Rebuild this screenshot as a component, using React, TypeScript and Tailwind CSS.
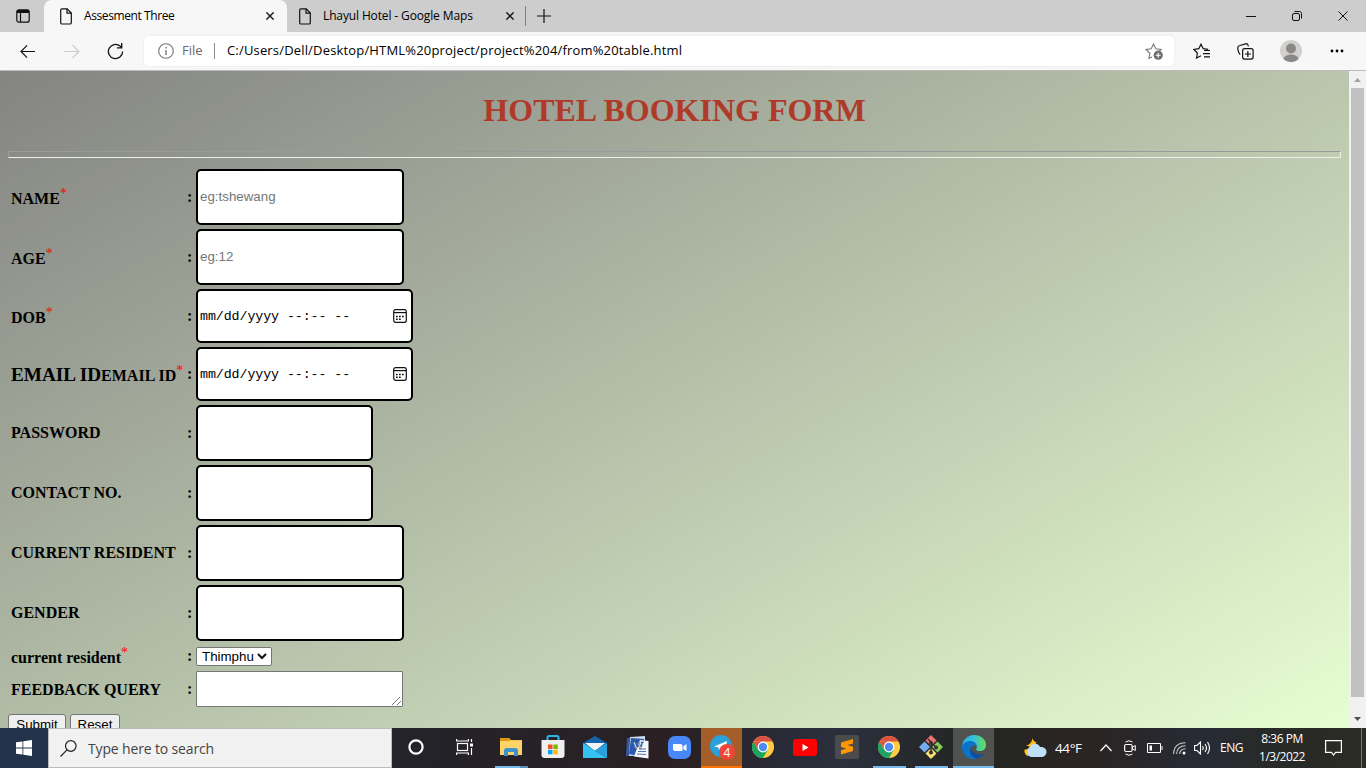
import React from "react";

const ui = "font-['Open_Sans','Noto_Sans',sans-serif]";

function PageIcon() {
  return (
    <svg width="12" height="17" viewBox="0 0 12 17" fill="none" stroke="#111" strokeWidth="1.2" className="shrink-0">
      <path d="M2 .8h5.2L11.3 5v9.7c0 .8-.5 1.3-1.3 1.3H2c-.8 0-1.3-.5-1.3-1.3V2.1C.7 1.3 1.2.8 2 .8Z" />
      <path d="M7 .8V5.2h4.3" />
    </svg>
  );
}

function Cross({ size = 8, w = 1.7 }: { size?: number; w?: number }) {
  return (
    <svg width={size} height={size} viewBox="0 0 10 10" stroke="#111" strokeWidth={w} className="shrink-0">
      <path d="M.5.5l9 9M9.5.5l-9 9" />
    </svg>
  );
}

function TabStrip() {
  return (
    <div className="flex h-8 items-stretch bg-[#cdcdcd]">
      <div className="flex w-[44px] items-center pl-4">
        <svg width="14" height="14" viewBox="0 0 14 14" fill="none" stroke="#111" strokeWidth="1.2">
          <rect x=".8" y=".8" width="12.4" height="12.4" rx="2" />
          <path d="M1 2.5h12" strokeWidth="3" />
          <path d="M4.5 4v9" />
        </svg>
      </div>
      <div className="flex w-[243px] shrink-0 items-center rounded-t-lg bg-[#f7f7f7] pl-[16px] pr-[13px]">
        <PageIcon />
        <span className="ml-3 grow whitespace-nowrap text-[12px] tracking-[-0.4px] text-black">Assesment Three</span>
        <Cross />
      </div>
      <div className="flex w-[238px] shrink-0 items-center pl-3 pr-[11px]">
        <PageIcon />
        <span className="ml-3 grow whitespace-nowrap text-[12px] tracking-[-0.13px] text-black">Lhayul Hotel - Google Maps</span>
        <Cross />
      </div>
      <div className="mt-[6px] h-5 w-px bg-[#808080]" />
      <div className="flex w-9 items-center justify-center">
        <svg width="14" height="14" viewBox="0 0 14 14" stroke="#111" strokeWidth="1.2"><path d="M7 0v14M0 7h14" /></svg>
      </div>
      <div className="ml-auto flex items-center gap-[36px] pr-[18px]">
        <svg width="10" height="10" stroke="#111"><path d="M0 5.5h10" /></svg>
        <svg width="10" height="10" viewBox="0 0 10 10" fill="none" stroke="#111">
          <rect x=".5" y="2.5" width="7" height="7" rx="1.5" />
          <path d="M2.500.5h5c1.3 0 2 .7 2 2v5" />
        </svg>
        <Cross size={10} w={1} />
      </div>
    </div>
  );
}

function Toolbar() {
  return (
    <div className="flex h-[39px] items-center border-b border-[#bcbcbc] bg-[#f7f7f7]">
      <div className="flex w-36 shrink-0 items-center pl-[20px]">
        <svg width="16" height="15" viewBox="0 0 17 15" fill="none" stroke="#111" strokeWidth="1.2"><path d="M16 7.5H1M7.5 1L1 7.5 7.5 14" /></svg>
        <svg width="16" height="15" viewBox="0 0 16 15" fill="none" stroke="#ccc" strokeWidth="1.1" className="ml-[28px]"><path d="M0 7.5h15M8.5 1L15 7.5 8.500 14" /></svg>
        <svg width="17" height="17" viewBox="0 0 17 17" fill="none" stroke="#111" strokeWidth="1.3" className="ml-[27px]">
          <path d="M15.6 8.5a7.1 7.1 0 1 1-2.5-5.4l1.4 1.3" /><path d="M14.7 0v4.8H9.9" />
        </svg>
      </div>
      <div className="flex h-[30px] w-[1030px] shrink-0 items-center rounded bg-white pl-[14px] shadow-[0_0_2px_#ddd]">
        <svg width="16" height="16" viewBox="0 0 16 16" fill="none" stroke="#777" strokeWidth="1.1"><circle cx="8" cy="8" r="7.3" /><path d="M8 7v5M8 4v1.5" strokeWidth="1.4" /></svg>
        <span className="ml-2 w-[24px] text-[13px] text-[#6a6a6a]">File</span>
        <span className="ml-2 h-4 w-px bg-[#8a8a8a]" />
        <span className="ml-3 grow whitespace-nowrap text-[13px] tracking-[0.17px] text-black">C:/Users/Dell/Desktop/HTML%20project/project%204/from%20table.html</span>
        <svg width="18" height="18" viewBox="0 0 18 18" fill="none" stroke="#777" strokeWidth="1.1" className="mr-[11px]">
          <path d="M7 15L4 16.3l.8-5L1 7.5l5.2-.8L8.5 2l2.3 4.7 5.2.8-1.5 1.5" />
          <circle cx="13.2" cy="13.2" r="4.6" fill="#6d6d6d" stroke="none" /><path d="M13.200 10.7v5M10.7 13.2h5" stroke="#fff" />
        </svg>
      </div>
      <div className="flex grow items-center pl-[19px]">
        <svg width="17" height="16" viewBox="0 0 17 16" fill="none" stroke="#111" strokeWidth="1.2">
          <path d="M8 12.7L3.5 15l.9-5L.8 6.400l5-.7L8 1.2l2.2 4.5 5 .6M11 7.5h6M10 10.7h7M11 13.9h6" />
        </svg>
        <svg width="17" height="17" viewBox="0 0 17 17" fill="none" stroke="#111" strokeWidth="1.2" className="ml-[27px]">
          <rect x="5.6" y="5.6" width="10.5" height="10.5" rx="2" /><path d="M10.850 8v6M7.85 11h6M3.3 11.5C2 11 .6 7 .8 4.5.9 3.2 1.5 2.8 2.8 2.5L8.7.8c1.3-.3 2 .3 2.3 1.3l.4 1.3" />
        </svg>
        <svg width="22" height="22" viewBox="0 0 22 22" className="ml-[26px]"><circle cx="11" cy="11" r="11" fill="#d2d0ce" /><circle cx="11" cy="8.5" r="5" fill="#8a8886" /><path d="M3.5 19c1-6 14-6 15 0-4 4-11 4-15 0Z" fill="#8a8886" /></svg>
        <svg width="14" height="4" viewBox="0 0 14 4" className="ml-[28px]"><circle cx="2" cy="2" r="1.4" /><circle cx="7" cy="2" r="1.4" /><circle cx="12" cy="2" r="1.4" /></svg>
      </div>
    </div>
  );
}

function Row({ h, label, sup, children }: { h: string; label: React.ReactNode; sup?: boolean; children: React.ReactNode }) {
  return (
    <div className={"flex shrink-0 items-center " + h}>
      <div className={"w-[179px] whitespace-nowrap pl-[3px] font-bold leading-[18px] " + (sup ? "pt-[3px]" : "")}>
        {label}
        {sup && <sup className="relative -top-[6px] text-[14px] font-normal leading-none text-[#f00]">*</sup>}
      </div>
      <div className="w-[9px] font-bold leading-[18px]">:</div>
      {children}
    </div>
  );
}

const box = "rounded-[5px] border-2 border-black bg-white pb-[2px] pl-[2px] font-['Liberation_Sans',Arial,sans-serif] text-[13.333px] placeholder:text-[#757575] outline-none";

function DateBox() {
  return (
    <div className="flex h-[54px] w-[217px] items-center rounded-[5px] border-2 border-black bg-white pl-[2px] pr-1 font-['Liberation_Mono','DejaVu_Sans_Mono',monospace] text-[13.333px]">
      <span className="grow whitespace-pre pt-px tracking-[-0.1px]">mm/dd/yyyy --:-- --</span>
      <svg width="14" height="14" viewBox="0 0 14 14" fill="none" stroke="#111" strokeWidth="1.2">
        <rect x=".7" y=".7" width="12.6" height="12.6" rx="2" /><path d="M1 3.6h12" />
        <path d="M3 7.500h1.700M6 7.500h1.700M9 7.500h1.700M3 10.300h1.700M6 10.300h1.700" strokeWidth="1.6" />
      </svg>
    </div>
  );
}

function Form() {
  return (
    <div className="flex h-[657px] shrink-0">
      <main className="h-[657px] w-[1349px] overflow-hidden bg-[linear-gradient(150deg,#848482,#e8ffd2)] bg-[length:100%_673px] px-2 font-['Liberation_Serif',serif] text-[16px] text-black">
        <h1 className="mt-[21px] text-center text-[32px] font-bold leading-[37px] text-[#b03a2a]">HOTEL BOOKING FORM</h1>
        <div className="mt-[22px] h-[7px] border border-b-[#eee] border-l-[#9a9a9a] border-r-[#eee] border-t-[#9a9a9a]" />
        <div className="mt-[11px] flex flex-col gap-1">
          <Row h="h-[56px]" label="NAME" sup><input className={"h-[56px] w-[208px] " + box} placeholder="eg:tshewang" /></Row>
          <Row h="h-[56px]" label="AGE" sup><input className={"h-[56px] w-[208px] " + box} placeholder="eg:12" /></Row>
          <Row h="h-[54px]" label="DOB" sup><DateBox /></Row>
          <Row h="h-[54px]" label={<><span className="text-[19.2px]">EMAIL ID</span>EMAIL ID</>} sup><DateBox /></Row>
          <Row h="h-[56px]" label="PASSWORD"><input className={"h-[56px] w-[177px] " + box} /></Row>
          <Row h="h-[56px]" label="CONTACT NO."><input className={"h-[56px] w-[177px] " + box} /></Row>
          <Row h="h-[56px]" label="CURRENT RESIDENT"><input className={"h-[56px] w-[208px] " + box} /></Row>
          <Row h="h-[56px]" label="GENDER"><input className={"h-[56px] w-[208px] " + box} /></Row>
          <Row h="h-[22px]" label="current resident" sup>
            <div className="flex h-[19px] w-[76px] items-center justify-between rounded-[2px] border border-[#767676] bg-white pl-[5px] pr-1 pt-px font-['Liberation_Sans',Arial,sans-serif] text-[13.333px] leading-none">
              Thimphu
              <svg width="10" height="7" viewBox="0 0 10 7" fill="none" stroke="#111" strokeWidth="2"><path d="M1 1l4 4 4-4" /></svg>
            </div>
          </Row>
          <Row h="h-[36px]" label={<span className="relative top-px">FEEDBACK QUERY</span>}>
            <div className="flex h-[36px] w-[207px] items-end justify-end rounded-[1px] border border-[#767676] bg-white p-px">
              <svg width="9" height="9" viewBox="0 0 9 9" stroke="#555" strokeWidth=".8"><path d="M0 9l8-8M5 9l4-4" /></svg>
            </div>
          </Row>
        </div>
        <div className="mt-[7px] flex gap-1 font-['Liberation_Sans',Arial,sans-serif] text-[13.333px]">
          <button className="h-[21px] w-[58px] rounded-[3px] border border-[#767676] bg-[#efefef] leading-[19px]">Submit</button>
          <button className="h-[21px] w-[50px] rounded-[3px] border border-[#767676] bg-[#efefef] leading-[19px]">Reset</button>
        </div>
      </main>
      <div className="flex w-[17px] flex-col items-center bg-[#f1f1f1]">
        <div className="flex h-[17px] items-center"><svg width="7" height="4"><path d="M0 4L3.5 0 7 4Z" fill="#a3a3a3" /></svg></div>
        <div className="h-[609px] w-[13px] bg-[#c1c1c1]" />
        <div className="mt-auto flex h-[19px] items-center"><svg width="7" height="4"><path d="M0 0l3.5 4L7 0Z" fill="#505050" /></svg></div>
      </div>
    </div>
  );
}

function Chrome() {
  return (
    <svg width="22" height="22" viewBox="0 0 22 22">
      <circle cx="11" cy="11" r="11" fill="#ffcd40" />
      <path d="M1.470 5.5A11 11 0 0 1 20.530 5.5H11Z" fill="#dd5144" />
      <path d="M1.470 5.5A11 11 0 0 0 11 22l4.8-8.3L11 11 6.2 13.7Z" fill="#1da462" />
      <path d="M1.470 5.5L6.2 13.7 11 5.5Z" fill="#dd5144" />
      <circle cx="11" cy="11" r="5.4" fill="#fff" /><circle cx="11" cy="11" r="4.2" fill="#4c8bf5" />
    </svg>
  );
}

function TaskItem({ children, bar, cls = "w-[42px]" }: { children: React.ReactNode; bar?: string; cls?: string }) {
  return (
    <div className={"flex shrink-0 flex-col items-center " + cls}>
      <div className="flex h-[38px] items-center">{children}</div>
      {bar && <div className={"h-[2px] " + bar} />}
    </div>
  );
}

function Taskbar() {
  return (
    <div className="flex h-10 shrink-0 items-stretch bg-[linear-gradient(to_right,#232329_30%,#2b2023_50%,#292c38_58%,#2b303d_62%,#25272a_68%,#252622_73%,#2b2422_80%,#272b36_88%,#282a2a_92%,#2a2b23)] text-white">
      <div className="flex w-12 items-center justify-center bg-[#25324c]">
        <svg width="16" height="16" viewBox="0 0 16 16" fill="#fff"><path d="M0 2.3l6.5-.9v6.2H0ZM7.3 1.3L16 0v7.6H7.3ZM0 8.4h6.5v6.200L0 13.7ZM7.3 8.4H16V16l-8.7-1.3Z" /></svg>
      </div>
      <div className="flex w-[344px] items-center border border-[#bbb] bg-[#f2f2f2] pl-[11px]">
        <svg width="17" height="17" viewBox="0 0 17 17" fill="none" stroke="#222" strokeWidth="1.2"><circle cx="10.8" cy="6" r="5.3" /><path d="M7 9.8L.5 16.5" /></svg>
        <span className="ml-[11px] pt-px text-[14px] tracking-[-0.15px] text-[#444]">Type here to search</span>
      </div>
      <div className="ml-[3px] flex">
        <TaskItem><svg width="16" height="16"><circle cx="8" cy="8" r="6.6" fill="none" stroke="#fff" strokeWidth="2.2" /></svg></TaskItem>
        <TaskItem cls="ml-[6px] w-[42px]">
          <svg width="17" height="16" viewBox="0 0 17 16" fill="none" stroke="#fff" strokeWidth="1.2"><rect x="1.5" y="4.5" width="10" height="7" /><path d="M.6 0v2h11.8V0M.6 16v-2h11.8v2M15.5 0v3M15.5 9v7" /><path d="M14 4.5h3v3h-3Z" fill="#fff" stroke="none" /></svg>
        </TaskItem>
        <TaskItem cls="ml-[5px] w-[42px]" bar="w-[33px] bg-[linear-gradient(to_right,#76b9ed_75%,#5a8fb8_75%)]">
          <svg width="22" height="18" viewBox="0 0 22 18"><path d="M0 0h9l2 2h11v15H0Z" fill="#f7c64d" /><path d="M0 0h9l1.5 2L9 3H0Z" fill="#dd9a10" /><path d="M0 3h22v14H0Z" fill="#ffd467" /><path d="M4 18v-6l1.5-2h11L18 12v6h-4v-4H8v4Z" fill="#3f92d2" /></svg>
        </TaskItem>
        <TaskItem>
          <svg width="24" height="24" viewBox="0 0 24 24"><path d="M6.5 6V2.5C6.5 1.5 7 1 8 1h8c1 0 1.5.5 1.5 1.5V6" fill="none" stroke="#32b3e8" strokeWidth="2" /><path d="M.5 5h23v15a3 3 0 0 1-3 3h-17a3 3 0 0 1-3-3Z" fill="#efefef" /><path d="M7 9.5h4.5V14H7Z" fill="#f25022" /><path d="M12.3 9.5h4.5V14h-4.5Z" fill="#7fba00" /><path d="M7 14.8h4.5v4.5H7Z" fill="#00a4ef" /><path d="M12.3 14.8h4.5v4.5h-4.5Z" fill="#ffb900" /></svg>
        </TaskItem>
        <TaskItem>
          <svg width="24" height="22" viewBox="0 0 24 22"><path d="M0 7L12 0l12 7v6H0Z" fill="#1465ac" /><path d="M2 7h20l-10 8Z" fill="#f4f4f4" /><path d="M0 7l12 7.5L24 22H0Z" fill="#35c1f1" /><path d="M24 7L12 14.5 24 22Z" fill="#2aa0df" /></svg>
        </TaskItem>
        <TaskItem>
          <svg width="23" height="23" viewBox="0 0 23 23"><path d="M4 1l15-1v20H2Z" fill="#c9d9ef" /><path d="M1 2h3L3 20H0Z" fill="#3458a4" /><path d="M5 2l13 1v4L12 20 3 18Z" fill="#2c5aa8" /><path d="M14 4l8.500 1v17.500l-14.500-2Z" fill="#f5f8fc" /><path d="M13 13h7M12 15.500h8M11 18l9 .5" stroke="#5574b5" /><text x="6.5" y="12.5" fontSize="11" fontWeight="700" fill="#fff" stroke="#234a91" strokeWidth=".6" fontFamily="Liberation Serif">W</text></svg>
        </TaskItem>
        <TaskItem>
          <svg width="23" height="23" viewBox="0 0 23 23"><rect width="23" height="23" rx="7" fill="#4787f7" /><path d="M5 8h7.5c1.3 0 2 .8 2 2v5H7c-1.3 0-2-.8-2-2ZM15.3 10.5L18.5 8v7l-3.2-2Z" fill="#fff" /></svg>
        </TaskItem>
        <TaskItem cls="ml-px w-[41px] bg-[#a55d2a]" bar="w-[41px] bg-[#ff7200]">
          <svg width="26" height="26" viewBox="0 0 26 26"><circle cx="12" cy="12" r="11" fill="#2ba0da" /><path d="M5 12.500L18 7l-2 10-4-2.500-2 2-.5-3Z" fill="#fff" /><circle cx="18" cy="18" r="8" fill="#ef4438" /><text x="18" y="22.5" textAnchor="middle" fontSize="12" fill="#fff" fontFamily="Open Sans">4</text></svg>
        </TaskItem>
        <TaskItem><Chrome /></TaskItem>
        <TaskItem><svg width="24" height="17" viewBox="0 0 24 17"><rect width="24" height="17" rx="3" fill="#f00" /><path d="M9.5 5l6 3.5-6 3.5Z" fill="#fff" /></svg></TaskItem>
        <TaskItem><svg width="24" height="24" viewBox="0 0 24 24"><rect width="24" height="24" rx="2" fill="#4b4b4b" /><path d="M6 7.5L18 4v4.5L12.5 10 18 11.8V16L6 19.5V15.3l5.500-1.700L6 12Z" fill="#ff9800" /></svg></TaskItem>
        <TaskItem bar="w-[33px] bg-[#76b9ed]"><Chrome /></TaskItem>
        <TaskItem bar="w-[33px] bg-[#76b9ed]">
          <svg width="24" height="24" viewBox="0 0 24 24"><path d="M12 0l5.5 5.5L12 11 6.5 5.5Z" fill="#f0706e" /><path d="M5.5 6.5L11 12l-5.5 5.5L0 12Z" fill="#74aef0" /><path d="M18.5 6.5L24 12l-5.5 5.5L13 12Z" fill="#85ca55" /><path d="M12 13l5.5 5.500L12 24l-5.500-5.500Z" fill="#fae073" /><path d="M9 4l3 3v10M12 8l5 4" stroke="#35302b" strokeWidth="1.5" fill="none" /><g fill="#35302b"><circle cx="12" cy="8" r="2" /><circle cx="12" cy="17.5" r="2" /><circle cx="17" cy="12.5" r="2" /></g></svg>
        </TaskItem>
        <TaskItem cls="ml-px w-[41px] bg-[#50524f]" bar="w-[41px] bg-[#76b9ed]">
          <svg width="24" height="24" viewBox="0 0 24 24">
            <defs><linearGradient id="eg" x1="0" x2="1"><stop offset="0" stopColor="#2ea9e6" /><stop offset=".5" stopColor="#35c2d9" /><stop offset="1" stopColor="#68dd50" /></linearGradient></defs>
            <path d="M0 12C0 5 5.5 0 12 0c7 0 12 4.5 12 10 0 4-3 6-6 6-3.5 0-4.5-1.3-3.5-2.5C16 11 13 6.5 8.5 6.5 4 6.5 1 9 0 12Z" fill="url(#eg)" />
            <path d="M0 12c1-4 4.5-6 8.5-6 3.5 0 6 2.5 6.2 5C9 8 7 14 9 18c1.5 3 4 5 6 5.5C7 26 0 20 0 12Z" fill="#0c73cc" />
            <path d="M9.5 12c-3 6 0 11 5.5 11.5 3-.5 6-2.5 7.5-5C17 21 9 18 9.5 12Z" fill="#104f9f" />
          </svg>
        </TaskItem>
      </div>
      <div className="ml-auto flex shrink-0 items-center">
        <svg width="23" height="20" viewBox="0 0 23 20" className="-mt-px shrink-0"><path d="M8.500 0c.5 2 1.500 3.500 4 4.500L10 9 3.500 18C1 17 0 14 .5 11.500 3 12 5 10.500 5.500 8.500L2 7.500C5.500 7 8 4 8.500 0Z" fill="#ffbd16" /><path d="M7 19a5 5 0 0 1-1-9.5c1-4.500 8-5 10-.5 4-.5 7 2 6.500 5.500-.3 2.500-2.500 4.500-5 4.500Z" fill="#bfe0f7" /></svg>
        <span className="ml-2 w-[36px] whitespace-nowrap pt-px text-[13.5px] tracking-[-0.4px]">44°F</span>
        <svg width="12" height="8" viewBox="0 0 12 8" fill="none" stroke="#fff" strokeWidth="1.2" className="ml-[9px]"><path d="M.5 7L6 1l5.5 6" /></svg>
        <svg width="12" height="16" viewBox="0 0 12 16" fill="none" stroke="#fff" className="ml-[12px]"><rect x=".6" y="4.5" width="7.5" height="7" rx="1.5" strokeWidth="1.2" /><path d="M8 7.500L11.300 5.500v5L8 8.500M1.500 2Q5-.5 8.500 2M1.500 14Q5 16.500 8.500 14" /></svg>
        <svg width="16" height="10" viewBox="0 0 16 10" fill="none" stroke="#fff" className="ml-[11px]"><path d="M.5.5h13v9H.5ZM15 3v4" /><path d="M2.500 2.500h2.500v5H2.500Z" fill="#fff" stroke="none" /></svg>
        <svg width="13" height="13" viewBox="0 0 13 13" fill="none" stroke="#ccc" strokeWidth="1.100" className="ml-[10px]"><path d="M.6 12Q1 1 12.500.8M3.600 12Q4 4 12.500 3.800M6.600 12Q7 7 12.500 6.800" /><circle cx="11" cy="11" r="1.500" fill="#fff" stroke="none" /></svg>
        <svg width="17" height="14" viewBox="0 0 17 14" fill="none" stroke="#fff" strokeWidth="1.100" className="ml-[8px]"><path d="M.6 4.500H3L6.500 1v12L3 9.500H.6ZM8.500 5q1.500 2 0 4M11 3q3 4 0 8M13.500 1q4 6 0 12" /></svg>
        <span className="ml-[9px] w-[24px] text-[12px] tracking-[-0.5px]">ENG</span>
        <div className="ml-[12px] w-[52px] whitespace-nowrap text-center text-[12px] leading-[18px] tracking-[-0.5px]">8:36 PM<br />1/3/2022</div>
        <svg width="17" height="16" viewBox="0 0 17 16" fill="none" stroke="#fff" strokeWidth="1.2" className="ml-[17px]"><path d="M.6.6h15.8v11.8h-5.9L8.5 15l-2-2.600H.6Z" /></svg>
        <div className="ml-[19px] mr-[4px] h-10 w-px bg-[#777]" />
      </div>
    </div>
  );
}

export default function App() {
  return (
    <div className={"flex h-[768px] w-[1366px] flex-col overflow-hidden " + ui}>
      <TabStrip />
      <Toolbar />
      <Form />
      <Taskbar />
    </div>
  );
}
